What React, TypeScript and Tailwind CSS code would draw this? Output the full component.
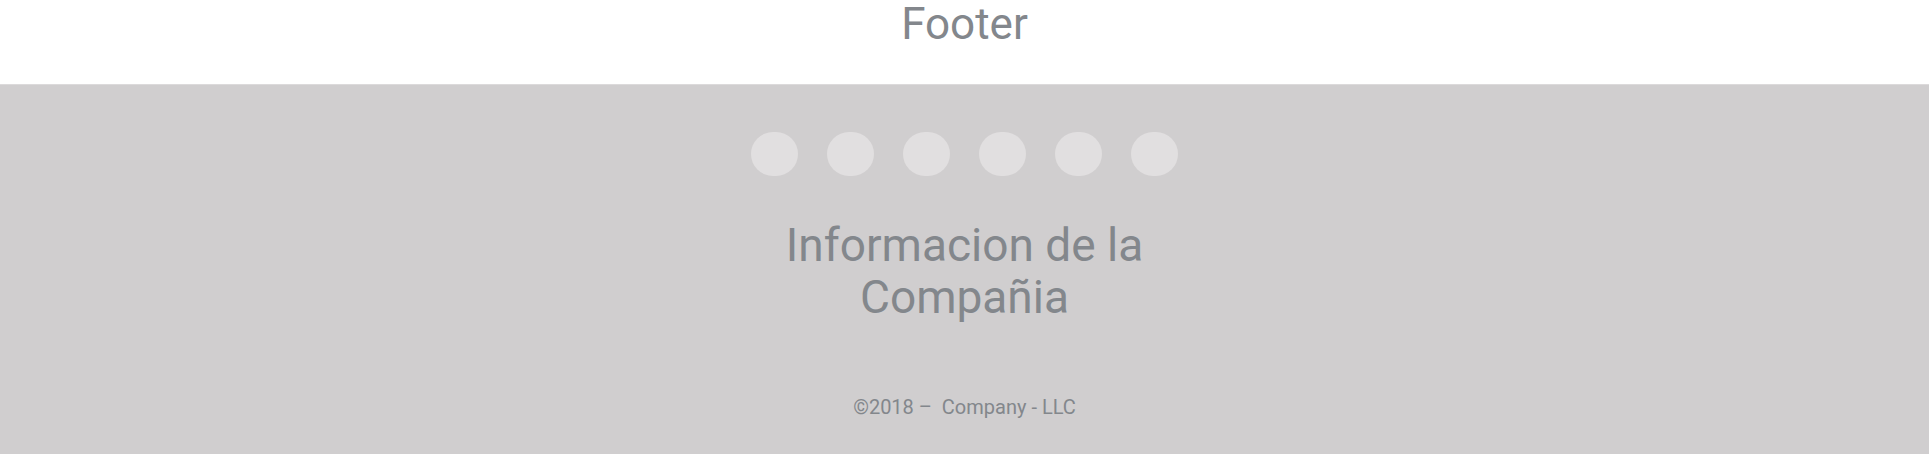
const redes = ["facebook", "twitter", "instagram", "youtube", "linkedin", "github"];

function App() {
  return (
    <div className="min-h-screen bg-white font-['Roboto',sans-serif] text-[#83878c]">
      <div className="h-[84px] pt-[2px] text-center">
        <h1 className="text-[44px] leading-none">Footer</h1>
      </div>

      <footer className="h-[370px] bg-[#d0cecf] border-t border-[#dcdadb] flex flex-col items-center pt-[47px]">
        <ul className="flex gap-[29px]">
          {redes.map((red) => (
            <li key={red} className="w-[47px] h-[44px] rounded-full bg-[#e1dfe0]" />
          ))}
        </ul>

        <h2 className="mt-[43px] w-[400px] text-center text-[46px] leading-[52px]">
          Informacion de la Compañia
        </h2>

        <p className="mt-[74px] text-[20px] leading-none">
          ©2018 –&nbsp; Company - LLC
        </p>
      </footer>
    </div>
  );
}

export default App;
